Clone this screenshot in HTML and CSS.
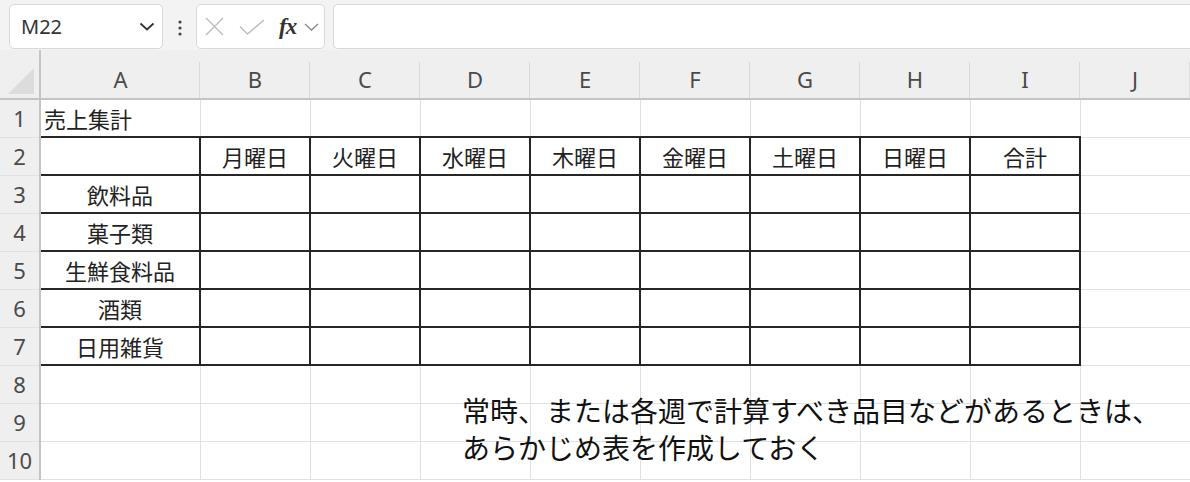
FILE: index.html
```html
<!DOCTYPE html>
<html lang="ja">
<head>
  <meta charset="UTF-8">
  <title>売上集計</title>
  <link rel="stylesheet" href="styles.css">
</head>
<body>
  <div class="toolbar">
    <div class="namebox">
      <span>M22</span>
      <svg width="16" height="9" viewBox="0 0 16 9"><path d="M1.5 1.5 L8 7.5 L14.5 1.5" fill="none" stroke="#333" stroke-width="1.8"/></svg>
    </div>
    <svg class="dots" width="6" height="16" viewBox="0 0 6 16"><circle cx="3" cy="2" r="1.6" fill="#444"/><circle cx="3" cy="8" r="1.6" fill="#444"/><circle cx="3" cy="14" r="1.6" fill="#444"/></svg>
    <div class="fxbox">
      <svg width="19" height="19" viewBox="0 0 19 19"><path d="M1 1 L18 18 M18 1 L1 18" stroke="#bdbdbd" stroke-width="1.4"/></svg>
      <svg width="26" height="16" viewBox="0 0 26 16"><path d="M1 7.5 L8.5 15 L25 1" fill="none" stroke="#bdbdbd" stroke-width="1.4"/></svg>
      <span class="fx">fx</span>
      <svg width="15" height="8" viewBox="0 0 15 8"><path d="M1 1 L7.5 7 L14 1" fill="none" stroke="#888" stroke-width="1.3"/></svg>
    </div>
    <div class="formula"></div>
  </div>

  <div class="sheet">
    <table class="grid">
      <colgroup>
        <col class="c-row"><col class="c-a">
        <col class="c-n"><col class="c-n"><col class="c-n"><col class="c-n">
        <col class="c-n"><col class="c-n"><col class="c-n"><col class="c-n"><col class="c-n">
      </colgroup>
      <tr class="heads">
        <th class="corner"><svg width="26" height="26" viewBox="0 0 26 26"><path d="M26 0 L26 26 L0 26 Z" fill="#dcdcdc"/></svg></th>
        <th>A</th><th>B</th><th>C</th><th>D</th><th>E</th><th>F</th><th>G</th><th>H</th><th>I</th><th>J</th>
      </tr>
      <tr>
        <th>1</th><td class="title">売上集計</td><td></td><td></td><td></td><td></td><td></td><td></td><td></td><td></td><td></td>
      </tr>
      <tr>
        <th>2</th><td class="b"></td><td class="b">月曜日</td><td class="b">火曜日</td><td class="b">水曜日</td><td class="b">木曜日</td><td class="b">金曜日</td><td class="b">土曜日</td><td class="b">日曜日</td><td class="b">合計</td><td></td>
      </tr>
      <tr>
        <th>3</th><td class="b">飲料品</td><td class="b"></td><td class="b"></td><td class="b"></td><td class="b"></td><td class="b"></td><td class="b"></td><td class="b"></td><td class="b"></td><td></td>
      </tr>
      <tr>
        <th>4</th><td class="b">菓子類</td><td class="b"></td><td class="b"></td><td class="b"></td><td class="b"></td><td class="b"></td><td class="b"></td><td class="b"></td><td class="b"></td><td></td>
      </tr>
      <tr>
        <th>5</th><td class="b">生鮮食料品</td><td class="b"></td><td class="b"></td><td class="b"></td><td class="b"></td><td class="b"></td><td class="b"></td><td class="b"></td><td class="b"></td><td></td>
      </tr>
      <tr>
        <th>6</th><td class="b">酒類</td><td class="b"></td><td class="b"></td><td class="b"></td><td class="b"></td><td class="b"></td><td class="b"></td><td class="b"></td><td class="b"></td><td></td>
      </tr>
      <tr>
        <th>7</th><td class="b">日用雑貨</td><td class="b"></td><td class="b"></td><td class="b"></td><td class="b"></td><td class="b"></td><td class="b"></td><td class="b"></td><td class="b"></td><td></td>
      </tr>
      <tr>
        <th>8</th><td></td><td></td><td></td><td></td><td></td><td></td><td></td><td></td><td></td><td></td>
      </tr>
      <tr>
        <th>9</th><td></td><td></td><td></td><td></td><td></td><td></td><td></td><td></td><td></td><td></td>
      </tr>
      <tr>
        <th>10</th><td></td><td></td><td></td><td></td><td></td><td></td><td></td><td></td><td></td><td></td>
      </tr>
    </table>

    <p class="note">常時、または各週で計算すべき品目などがあるときは、<br>あらかじめ表を作成しておく</p>
  </div>
</body>
</html>
```

FILE: styles.css
```css
body {
  margin: 0;
  width: 1190px;
  height: 482px;
  overflow: hidden;
  background: #fff;
  font-family: "Noto Sans", "Noto Sans CJK JP", sans-serif;
  color: #222;
}
.toolbar {
  height: 50px;
  box-sizing: border-box;
  padding: 4px 0 0 9px;
  background: #f3f3f3;
  display: flex;
  align-items: flex-start;
}
.namebox, .fxbox, .formula {
  height: 45px;
  box-sizing: border-box;
  background: #fff;
  border: 1px solid #d8d8d8;
  border-radius: 5px;
  display: flex;
  align-items: center;
}
.namebox {
  width: 154px;
  padding: 0 7px 0 11px;
  justify-content: space-between;
  font-size: 20px;
  color: #333;
}
.dots {
  margin: 16px 13px 0 14px;
}
.fxbox {
  width: 129px;
  padding: 0 0 0 8px;
}
.fxbox svg:nth-child(2) {
  margin-left: 15px;
}
.fx {
  margin-left: 14px;
  font-family: "Liberation Serif", serif;
  font-style: italic;
  font-weight: bold;
  font-size: 23px;
  color: #333;
  letter-spacing: -1px;
}
.fxbox svg:last-child {
  margin-left: 8px;
}
.formula {
  flex: 1;
  margin-left: 8px;
  border-right: none;
  border-radius: 5px 0 0 5px;
}
.sheet {
  position: relative;
}
.grid {
  border-collapse: collapse;
  table-layout: fixed;
  width: 1190px;
}
.c-row { width: 40px; }
.c-a { width: 160px; }
.c-n { width: 110px; }
.grid tr {
  height: 38px;
}
.grid th, .grid td {
  padding: 0;
  border: 1px solid #e1e1e1;
  text-align: center;
  font-weight: normal;
}
.grid td {
  font-family: "Noto Sans CJK JP", sans-serif;
  font-size: 22px;
  color: #222;
}
.grid th {
  background: #efefef;
  color: #4a4a4a;
  font-size: 22px;
}
.grid tr th:first-child {
  border-right: 2px solid #c4c4c4;
  border-left: none;
}
.grid tr.heads {
  height: 49px;
}
.heads th {
  border-top: none;
  border-left: none;
  border-right: none;
  border-bottom: 2px solid #c4c4c4;
  padding-top: 10px;
  background: #efefef linear-gradient(#d9d9d9, #d9d9d9) right bottom / 1px 36px no-repeat;
}
.heads th.corner {
  vertical-align: bottom;
  text-align: left;
  padding: 0 0 4px 8px;
  border-right: 2px solid #c4c4c4;
  background: #efefef;
  line-height: 0;
}
.grid td.title {
  text-align: left;
  padding-left: 3px;
  border-left: none;
}
.grid td.b {
  border: 2px solid #262626;
}
.note {
  position: absolute;
  left: 462px;
  top: 342px;
  margin: 0;
  font-family: "Noto Sans CJK JP", sans-serif;
  font-size: 28px;
  line-height: 37px;
  color: #111;
}
```
